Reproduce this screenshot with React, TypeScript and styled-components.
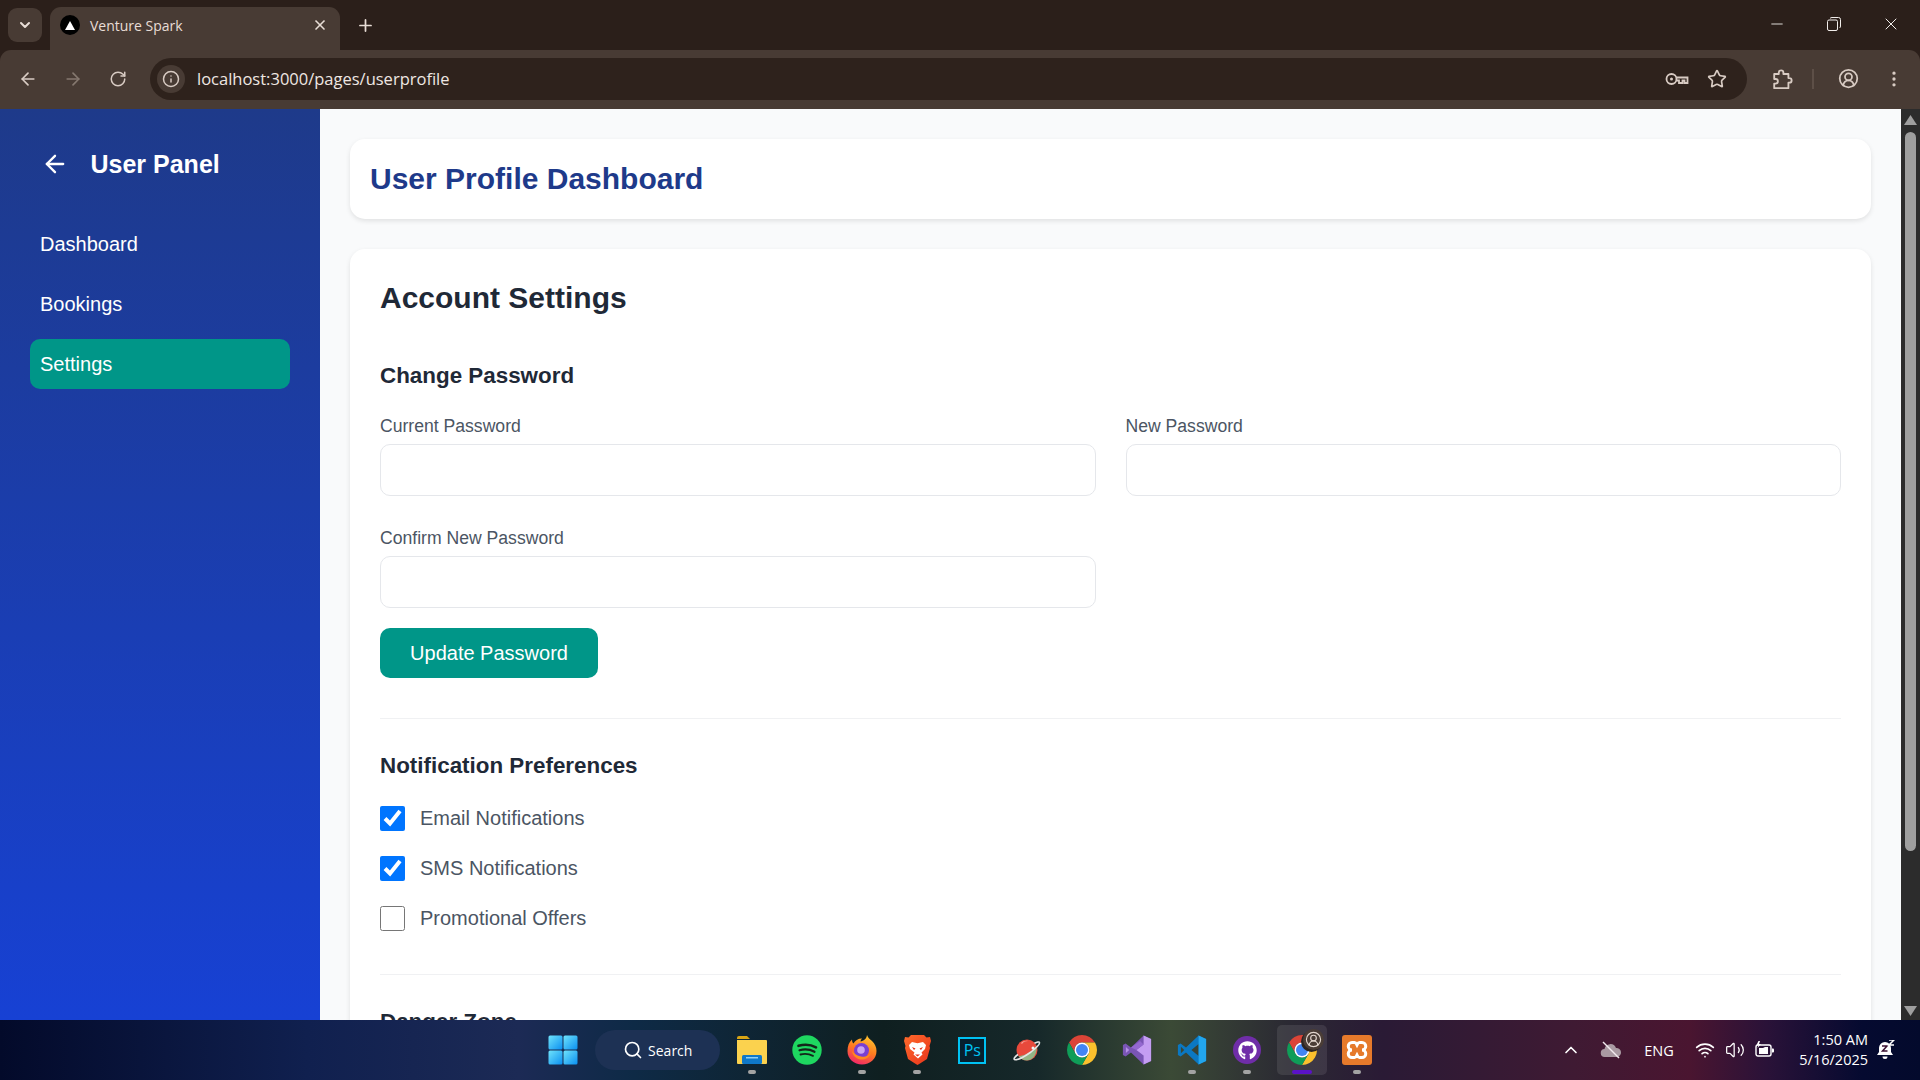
import React from "react";
import styled, { createGlobalStyle } from "styled-components";
import {
  ArrowLeft,
  ArrowRight,
  ChevronDown,
  ChevronUp,
  CircleUserRound,
  EllipsisVertical,
  Info,
  Minus,
  Plus,
  RotateCw,
  Search,
  Star,
  Volume2,
  Wifi,
  X,
} from "lucide-react";
import { FaGithub } from "react-icons/fa";

const UI_FONT = '"Liberation Sans", Arial, sans-serif';
const SYSTEM_FONT = '"Open Sans", "Noto Sans", sans-serif';

const GlobalStyle = createGlobalStyle`
  * { box-sizing: border-box; }
  html, body { margin: 0; padding: 0; height: 100%; overflow: hidden; }
  body { font-family: ${UI_FONT}; }
`;

const Screen = styled.div`
  display: flex;
  flex-direction: column;
  width: 1920px;
  height: 1080px;
  overflow: hidden;
  background: #2b1f1a;
`;

/* browser chrome */
const TabStrip = styled.div`
  display: flex;
  align-items: flex-end;
  flex: 0 0 50px;
  padding-left: 8px;
  background: #2b1f1a;
  color: #e8ddd6;
`;

const TabSearch = styled.div`
  display: flex;
  align-items: center;
  justify-content: center;
  width: 34px;
  height: 34px;
  margin-bottom: 8px;
  border-radius: 9px;
  background: #483b34;
`;

const Tab = styled.div`
  display: flex;
  align-items: center;
  width: 290px;
  height: 43px;
  margin-left: 8px;
  padding: 0 12px 7px 10px;
  border-radius: 11px 11px 0 0;
  background: #483b34;
`;

const Favicon = styled.span`
  display: flex;
  align-items: center;
  justify-content: center;
  width: 20px;
  height: 20px;
  border-radius: 50%;
  background: #000;
`;

const TabTitle = styled.span`
  flex: 1;
  margin-left: 10px;
  font-family: ${SYSTEM_FONT};
  font-size: 14px;
  color: #e8ddd6;
`;

const NewTab = styled.div`
  display: flex;
  align-items: center;
  justify-content: center;
  width: 30px;
  height: 30px;
  margin: 0 0 10px 10px;
`;

const WindowControls = styled.div`
  display: flex;
  align-items: center;
  height: 100%;
  margin-left: auto;
  padding-bottom: 2px;
  padding-right: 1px;
`;

const WindowButton = styled.div`
  display: flex;
  align-items: center;
  justify-content: center;
  width: 57px;
  height: 48px;
  color: #f2eeeb;
`;

const Toolbar = styled.div`
  display: flex;
  align-items: center;
  flex: 0 0 59px;
  padding: 0 0 2px 5px;
  border-radius: 11px 11px 0 0;
  background: #483b34;
  color: #d8cbc3;
`;

const NavButton = styled.div<{ $dim?: boolean; $left?: number }>`
  display: flex;
  align-items: center;
  justify-content: center;
  width: 45px;
  height: 40px;
  margin-left: ${(p) => p.$left ?? 0}px;
  color: ${(p) => (p.$dim ? "#85786f" : "#d8cbc3")};
`;

const Omnibox = styled.div`
  display: flex;
  align-items: center;
  width: 1597px;
  height: 42px;
  margin-left: 10px;
  padding: 0 10px 0 7px;
  border-radius: 21px;
  background: #2e221c;
`;

const SiteInfo = styled.div`
  display: flex;
  align-items: center;
  justify-content: center;
  width: 28px;
  height: 28px;
  border-radius: 50%;
  background: #483b34;
`;

const UrlText = styled.span`
  flex: 1;
  margin-left: 12px;
  font-family: ${SYSTEM_FONT};
  font-size: 16.5px;
  color: #efe7e2;
`;

const OmniIcon = styled.div`
  display: flex;
  align-items: center;
  justify-content: center;
  width: 40px;
  height: 40px;
`;

const ToolbarDivider = styled.div`
  width: 2px;
  height: 20px;
  margin: 0 3px 0 8px;
  background: #5d4f47;
`;

/* page */
const PageRow = styled.div`
  display: flex;
  flex: 1;
  min-height: 0;
  background: #f9fafb;
`;

const Sidebar = styled.aside`
  flex: 0 0 320px;
  padding: 30px;
  background: linear-gradient(180deg, #1e3a8a 0%, #1741d4 100%);
  color: #fff;
`;

const SidebarHead = styled.div`
  display: flex;
  align-items: center;
  height: 50px;
  margin-bottom: 30px;
  padding-left: 11px;
  gap: 21.5px;
`;

const SidebarTitle = styled.h2`
  margin: 0;
  font-size: 25px;
  font-weight: 700;
`;

const NavList = styled.nav`
  display: flex;
  flex-direction: column;
  gap: 10px;
`;

const NavItem = styled.a<{ $active?: boolean }>`
  display: flex;
  align-items: center;
  height: 50px;
  padding: 0 10px;
  border-radius: 10px;
  font-size: 20px;
  color: #fff;
  background: ${(p) => (p.$active ? "#009688" : "transparent")};
`;

const Main = styled.main`
  flex: 1;
  min-width: 0;
  padding: 30px;
  overflow: hidden;
`;

const HeaderCard = styled.header`
  display: flex;
  align-items: center;
  height: 80px;
  margin-bottom: 30px;
  padding: 0 20px;
  border-radius: 15px;
  background: #fff;
  box-shadow: 0 2px 5px rgba(0, 0, 0, 0.1);
`;

const PageTitle = styled.h1`
  margin: 0;
  font-size: 30px;
  font-weight: 700;
  color: #1e3a8a;
`;

const SettingsCard = styled.section`
  padding: 30px;
  border-radius: 15px;
  background: #fff;
  box-shadow: 0 2px 5px rgba(0, 0, 0, 0.1);
`;

const CardTitle = styled.h2`
  margin: 0 0 46px;
  font-size: 30px;
  line-height: 38px;
  font-weight: 700;
  color: #1f2937;
`;

const SectionTitle = styled.h3`
  margin: 0 0 27px;
  font-size: 22.4px;
  line-height: 26px;
  font-weight: 700;
  color: #1f2937;
`;

const FieldGrid = styled.div`
  display: grid;
  grid-template-columns: repeat(2, minmax(0, 1fr));
  gap: 32px 30px;
`;

const Field = styled.label`
  display: block;
`;

const FieldLabel = styled.span`
  display: block;
  margin-bottom: 8px;
  font-size: 17.6px;
  line-height: 20px;
  color: #4b5563;
`;

const TextInput = styled.input`
  display: block;
  width: 100%;
  height: 52px;
  padding: 0 15px;
  border: 1px solid #e5e7eb;
  border-radius: 10px;
  background: #fff;
  outline: none;
`;

const PrimaryButton = styled.button`
  display: block;
  width: 218px;
  height: 50px;
  margin-top: 20px;
  border: 0;
  border-radius: 10px;
  background: #009688;
  color: #fff;
  font-family: ${UI_FONT};
  font-size: 20px;
`;

const Divider = styled.hr<{ $top: number }>`
  margin: ${(p) => p.$top}px 0 34px;
  border: 0;
  border-top: 1px solid #f0f1f3;
`;

const CheckList = styled.div`
  display: flex;
  flex-direction: column;
  gap: 25px;
`;

const CheckRow = styled.label`
  display: flex;
  align-items: center;
  gap: 15px;
  height: 25px;
  font-size: 20px;
  color: #4b5563;
`;

const CheckBox = styled.input`
  width: 25px;
  height: 25px;
  margin: 0;
`;

const ScrollTrack = styled.div`
  display: flex;
  flex-direction: column;
  align-items: center;
  flex: 0 0 19px;
  background: #2c2c2c;
`;

const ScrollThumb = styled.div`
  width: 11px;
  height: 719px;
  margin: 7px 0 149px;
  border-radius: 6px;
  background: #9f9f9f;
`;

const ScrollArrow = styled.svg`
  display: block;
  width: 13px;
  height: 10px;
  margin-top: 6px;
  flex: none;
`;

/* taskbar */
const Taskbar = styled.footer`
  display: grid;
  grid-template-columns: 1fr auto 1fr;
  align-items: center;
  flex: 0 0 60px;
  background: linear-gradient(
    90deg,
    #030a2a 0%,
    #10204f 16%,
    #1c2a55 27%,
    #0e2a46 33%,
    #0f1f20 46%,
    #16282a 54%,
    #3b4a36 61%,
    #2b2a33 67%,
    #2a1a35 72%,
    #3f1a33 82%,
    #4a1530 88%,
    #2a1238 92%,
    #050a30 97%,
    #030a2c 100%
  );
`;

const TaskCenter = styled.div`
  display: flex;
  align-items: center;
  grid-column: 2;
  height: 60px;
`;

const TaskSlot = styled.div<{ $run?: boolean; $active?: boolean }>`
  position: relative;
  display: flex;
  align-items: center;
  justify-content: center;
  width: 55px;
  height: 60px;

  ${(p) =>
    p.$active &&
    `
    &::before {
      content: "";
      position: absolute;
      left: 0;
      top: 5px;
      width: 50px;
      height: 50px;
      margin-left: 2.5px;
      border-radius: 5px;
      background: rgba(255, 255, 255, 0.09);
    }
    &::after {
      content: "";
      position: absolute;
      left: 17.5px;
      bottom: 6px;
      width: 20px;
      height: 4px;
      border-radius: 2px;
      background: #5a12c8;
    }
  `}

  ${(p) =>
    p.$run &&
    `
    &::after {
      content: "";
      position: absolute;
      left: 23.5px;
      bottom: 6px;
      width: 8px;
      height: 4px;
      border-radius: 2px;
      background: #a3a3a3;
    }
  `}

  & > svg {
    position: relative;
  }
`;

const SearchPill = styled.div`
  display: flex;
  align-items: center;
  justify-content: center;
  gap: 5px;
  width: 125px;
  height: 40px;
  margin: 0 4.5px 0 5px;
  border-radius: 20px;
  background: #1d3154;
  color: #fff;
  font-family: ${SYSTEM_FONT};
  font-size: 14px;
`;

const Tray = styled.div`
  display: flex;
  align-items: center;
  justify-self: end;
  height: 60px;
  padding-right: 16px;
  color: #fff;
`;

const TrayItem = styled.div<{ $w: number }>`
  display: flex;
  align-items: center;
  justify-content: center;
  width: ${(p) => p.$w}px;
`;

const TrayText = styled.span`
  font-family: ${SYSTEM_FONT};
  font-size: 14.5px;
`;

const Clock = styled.div`
  width: 85px;
  font-family: ${SYSTEM_FONT};
  font-size: 14.5px;
  line-height: 20px;
  text-align: right;
  color: #fff;
`;

const WindowsLogo = () => (
  <svg width="30" height="30" viewBox="0 0 30 30">
    <defs>
      <linearGradient id="win" x1="0" y1="0" x2="1" y2="1">
        <stop offset="0" stopColor="#6fe3fb" />
        <stop offset="1" stopColor="#0a8ff0" />
      </linearGradient>
    </defs>
    <rect x="0.5" y="0.5" width="14" height="14" rx="1.5" fill="url(#win)" />
    <rect x="15.5" y="0.5" width="14" height="14" rx="1.5" fill="url(#win)" />
    <rect x="0.5" y="15.5" width="14" height="14" rx="1.5" fill="url(#win)" />
    <rect x="15.5" y="15.5" width="14" height="14" rx="1.5" fill="url(#win)" />
  </svg>
);

const FolderIcon = () => (
  <svg width="30" height="28" viewBox="0 0 30 28">
    <path d="M0 2a2 2 0 0 1 2-2h8l3 3h-13z" fill="#d9a514" />
    <path d="M0 4h29a1 1 0 0 1 1 1v22a1 1 0 0 1-1 1H1a1 1 0 0 1-1-1z" fill="#fbd24e" />
    <rect x="5" y="19" width="20" height="9" rx="1.5" fill="#0f78c9" />
    <rect x="9" y="21" width="12" height="1.5" fill="#8ed0f7" />
  </svg>
);

const SpotifyIcon = () => (
  <svg width="30" height="30" viewBox="0 0 30 30">
    <circle cx="15" cy="15" r="14.7" fill="#1ed760" />
    <g fill="none" stroke="#14261a" strokeLinecap="round">
      <path d="M6.5 10.8c6-1.7 12.5-1.2 17.5 1.6" strokeWidth="2.6" />
      <path d="M7.5 15.3c5-1.4 10.5-.9 15 1.5" strokeWidth="2.2" />
      <path d="M8.5 19.5c4.3-1 8.7-.6 12.5 1.4" strokeWidth="1.8" />
    </g>
  </svg>
);

const FirefoxIcon = () => (
  <svg width="30" height="30" viewBox="0 0 30 30">
    <defs>
      <linearGradient id="ffx" x1="0.7" y1="0" x2="0.3" y2="1">
        <stop offset="0" stopColor="#ffc62e" />
        <stop offset="0.5" stopColor="#ff7a1f" />
        <stop offset="1" stopColor="#f0256b" />
      </linearGradient>
    </defs>
    <path
      d="M20 0c1 3 3 4 5 6 3 3 4.5 6 4.5 10 0 8-6.500 13.500-14.500 13.500S.5 24 .5 16C.5 11 2 7 5 4.500c0 2 .5 3 1.500 4C8 5.500 11 3.500 15 3.500c-1 1-1.500 2-1.500 3 3-.5 6-2.500 6.500-6.500z"
      fill="url(#ffx)"
    />
    <circle cx="14.500" cy="15.500" r="7.500" fill="#7a3fd0" />
    <circle cx="14" cy="15" r="3.800" fill="#c9a4f2" />
    <path d="M5 16c1 6 6 9 11 8.500 4-.4 7-3 8-7-2 3.500-6 5-10 4-4-.8-7-3-9-5.500z" fill="#ff8a1e" />
  </svg>
);

const BraveIcon = () => (
  <svg width="27" height="30" viewBox="0 0 27 30">
    <defs>
      <linearGradient id="brv" x1="0" y1="0" x2="1" y2="1">
        <stop offset="0" stopColor="#ff6a2b" />
        <stop offset="1" stopColor="#e8341c" />
      </linearGradient>
    </defs>
    <path
      d="M7 0h13l2.500 2.500L26 2l1 4-1.500 5 .5 2-3 11-7 4.500-2.500 1.500-2.500-1.500L4 24 1 13l.5-2L0 6l1-4 3.500.5z"
      fill="url(#brv)"
    />
    <path
      d="M8 7l5.500 1.200L19 7l3 3-1 4-3.500 3.500 1 2-4.500 4-4.500-4 1-2L6 14l-1-4z"
      fill="#fff"
    />
    <path d="M8 12l3.500 1.500L10 15zM19 12l-3.500 1.500L17 15z" fill="#e8341c" />
    <path d="M11 19.500h5L13.500 21.500z" fill="#e8341c" />
  </svg>
);

const PsBox = styled.div`
  display: flex;
  align-items: center;
  justify-content: center;
  width: 28px;
  height: 27px;
  border: 2px solid #00c2f3;
  background: #06202e;
  color: #00c2f3;
  font-family: ${SYSTEM_FONT};
  font-size: 16px;
  line-height: 1;
`;

const PlanetIcon = () => (
  <svg width="28" height="24" viewBox="0 0 28 24">
    <circle cx="14" cy="12" r="10.500" fill="#e8493b" />
    <path d="M5.500 18c4 0 11-2 18-10 1 6-2.500 14.500-9.500 14.500-3.500 0-6.500-2-8.500-4.500z" fill="#93b585" />
    <path d="M8 5c2-2 5-2.500 7-2-3 0-5 1-6 3z" fill="#f7a79d" />
    <path
      d="M5 16.500C1.500 19 .5 21 1.500 21.500 4 22.500 11 19 18 14c5-4 9-8 8.500-9.500-.3-1-2.500-.5-5 .8"
      fill="none"
      stroke="#e4e4e4"
      strokeWidth="1.600"
    />
    <circle cx="20" cy="10" r="1.500" fill="#f2f2f2" />
  </svg>
);

const ChromeIcon = () => (
  <svg width="30" height="30" viewBox="4 4 40 40">
    <path d="M24 14H41.320A20 20 0 0 0 6.680 14L15.340 29A10 10 0 0 1 24 14Z" fill="#db4437" />
    <path d="M41.320 14A20 20 0 0 1 24 44L32.660 29A10 10 0 0 0 24 14Z" fill="#fbc02d" />
    <path d="M24 44A20 20 0 0 1 6.680 14L15.340 29A10 10 0 0 0 32.660 29Z" fill="#0f9d58" />
    <circle cx="24" cy="24" r="10" fill="#fff" />
    <circle cx="24" cy="24" r="8" fill="#4285f4" />
  </svg>
);

const VisualStudioIcon = () => (
  <svg width="30" height="30" viewBox="0 0 100 100">
    <path d="M72 2 30 42 12 28 3 33v34l9 5 18-14 42 40 25-11V13z" fill="#7a55b5" />
    <path d="M72 2l25 11v74l-25 11V68L48 50l24-18z" fill="#c49df2" />
    <path d="M13 40v20l11-10z" fill="#b58fe6" />
    <path d="M48 50 72 32 60 20 30 42z" fill="#9468d0" />
  </svg>
);

const VsCodeIcon = () => (
  <svg width="30" height="30" viewBox="0 0 100 100">
    <path
      fill="#0b78c2"
      fillRule="evenodd"
      d="M72 2 30 42 12 28 3 33v34l9 5 18-14 42 40 25-11V13zM72 30 48 50l24 20zM13 39v22l11-11z"
    />
    <path d="M72 2l25 11v74L72 98z" fill="#22a6ee" />
  </svg>
);

const GithubCircle = styled.div`
  display: flex;
  align-items: center;
  justify-content: center;
  width: 28px;
  height: 28px;
  border-radius: 50%;
  background: #6f2da8;
  color: #fff;
`;

const ChromeProfile = styled.div`
  position: absolute;
  left: 28.5px;
  top: 9px;
  display: flex;
  align-items: center;
  justify-content: center;
  width: 21px;
  height: 21px;
  border-radius: 50%;
  background: #4a3d36;
  box-shadow: -2px 2px 0 #2c2420;
  color: #e2d6ce;
`;

const XamppIcon = () => (
  <svg width="30" height="30" viewBox="0 0 30 30">
    <rect width="30" height="30" rx="3" fill="#e67a2b" />
    <path
      d="M10 7.500h2.500c1.500 0 2 1.500 2.500 2.500.5-1 1-2.500 2.500-2.500H20a3.500 3.500 0 0 1 0 7.500 3.500 3.500 0 0 1 0 7.500h-2.500c-1.500 0-2-1.500-2.500-2.500-.5 1-1 2.500-2.500 2.500H10A3.500 3.500 0 0 1 10 15a3.500 3.500 0 0 1 0-7.500z"
      fill="none"
      stroke="#fff"
      strokeWidth="3"
    />
  </svg>
);

const KeyIcon = () => (
  <svg width="24" height="14" viewBox="0 0 24 14" fill="none" stroke="#d8cbc3" strokeWidth="1.800">
    <circle cx="6.500" cy="7" r="5" />
    <circle cx="6.500" cy="7" r="1.500" fill="#d8cbc3" stroke="none" />
    <path d="M11.500 5.500H22.500V11H19.500V8.500H17.500V11H14V8.500H11.500" />
  </svg>
);

const ExtensionIcon = () => (
  <svg width="22" height="22" viewBox="0 0 24 24" fill="none" stroke="#d8cbc3" strokeWidth="2" strokeLinejoin="round">
    <path d="M3.500 6.500h5V5a2.500 2.500 0 0 1 5 0v1.500h5.500V11h1a2.500 2.500 0 0 1 0 5h-1v6H3.500v-5H5a2.500 2.500 0 0 0 0-5H3.500z" />
  </svg>
);

const RestoreIcon = () => (
  <svg width="14" height="14" viewBox="0 0 14 14" fill="none" stroke="#f2eeeb" strokeWidth="1">
    <rect x="0.500" y="3" width="10" height="10.500" rx="1.500" />
    <path d="M3 1.500C3.500.8 4 .5 5 .5h6.500A2 2 0 0 1 13.500 2.500V9c0 1-.3 1.500-1 2" />
  </svg>
);

const CloudOff = () => (
  <svg width="22" height="18" viewBox="0 0 22 18">
    <path d="M5 16a4 4 0 0 1-.5-8 6 6 0 0 1 11.500-1 4.500 4.500 0 0 1 1 9z" fill="#a99aa2" />
    <path d="M3 1l16 16" stroke="#f2eaee" strokeWidth="1.500" />
  </svg>
);

const BatteryIcon = () => (
  <svg width="20" height="18" viewBox="0 0 20 18" fill="none">
    <rect x="1" y="4" width="15" height="11" rx="2" stroke="#fff" strokeWidth="1.400" />
    <path d="M4 13V7h4l2-1 3 0v7z" fill="#fff" />
    <path d="M17 7.500h1a1 1 0 0 1 1 1v2a1 1 0 0 1-1 1h-1z" fill="#fff" />
    <path d="M3.500 0 1.500 4h2L2.500 7 6 3H4l1-3z" fill="#fff" />
  </svg>
);

const BellIcon = () => (
  <svg width="18" height="20" viewBox="0 0 18 20">
    <path d="M8 2a6 6 0 0 0-6 6v4l-2 3h16l-2-3V8a6 6 0 0 0-6-6z" fill="#fff" />
    <path d="M5.500 16.500a2.500 2.500 0 0 0 5 0z" fill="#fff" />
    <path d="M5 6h5L5.500 11h5" fill="none" stroke="#3a1030" strokeWidth="1.500" />
    <path d="M12 0h5l-5 5h5" fill="none" stroke="#fff" strokeWidth="1.500" />
  </svg>
);

const navItems = ["Dashboard", "Bookings", "Settings"];

const notifications = [
  { label: "Email Notifications", checked: true },
  { label: "SMS Notifications", checked: true },
  { label: "Promotional Offers", checked: false },
];

export default function App() {
  return (
    <Screen>
      <GlobalStyle />
      <TabStrip>
        <TabSearch>
          <ChevronDown size={16} strokeWidth={3} />
        </TabSearch>
        <Tab>
          <Favicon>
            <svg width="10" height="9" viewBox="0 0 10 9">
              <path d="M5 0l5 9H0z" fill="#fff" />
            </svg>
          </Favicon>
          <TabTitle>Venture Spark</TabTitle>
          <X size={16} strokeWidth={2.5} />
        </Tab>
        <NewTab>
          <Plus size={19} strokeWidth={2.2} />
        </NewTab>
        <WindowControls>
          <WindowButton>
            <Minus size={18} strokeWidth={1.2} />
          </WindowButton>
          <WindowButton>
            <RestoreIcon />
          </WindowButton>
          <WindowButton>
            <X size={20} strokeWidth={1.2} />
          </WindowButton>
        </WindowControls>
      </TabStrip>

      <Toolbar>
        <NavButton>
          <ArrowLeft size={20} />
        </NavButton>
        <NavButton $dim>
          <ArrowRight size={20} />
        </NavButton>
        <NavButton>
          <RotateCw size={18} />
        </NavButton>
        <Omnibox>
          <SiteInfo>
            <Info size={18} />
          </SiteInfo>
          <UrlText>localhost:3000/pages/userprofile</UrlText>
          <OmniIcon>
            <KeyIcon />
          </OmniIcon>
          <OmniIcon>
            <Star size={20} />
          </OmniIcon>
        </Omnibox>
        <NavButton $left={12}>
          <ExtensionIcon />
        </NavButton>
        <ToolbarDivider />
        <NavButton $left={9}>
          <CircleUserRound size={21} />
        </NavButton>
        <NavButton>
          <EllipsisVertical size={20} />
        </NavButton>
      </Toolbar>

      <PageRow>
        <Sidebar>
          <SidebarHead>
            <ArrowLeft size={28} strokeWidth={2} />
            <SidebarTitle>User Panel</SidebarTitle>
          </SidebarHead>
          <NavList>
            {navItems.map((item) => (
              <NavItem key={item} $active={item === "Settings"}>
                {item}
              </NavItem>
            ))}
          </NavList>
        </Sidebar>

        <Main>
          <HeaderCard>
            <PageTitle>User Profile Dashboard</PageTitle>
          </HeaderCard>
          <SettingsCard>
            <CardTitle>Account Settings</CardTitle>
            <SectionTitle>Change Password</SectionTitle>
            <FieldGrid>
              <Field>
                <FieldLabel>Current Password</FieldLabel>
                <TextInput type="password" />
              </Field>
              <Field>
                <FieldLabel>New Password</FieldLabel>
                <TextInput type="password" />
              </Field>
              <Field>
                <FieldLabel>Confirm New Password</FieldLabel>
                <TextInput type="password" />
              </Field>
            </FieldGrid>
            <PrimaryButton>Update Password</PrimaryButton>
            <Divider $top={40} />
            <SectionTitle>Notification Preferences</SectionTitle>
            <CheckList>
              {notifications.map((n) => (
                <CheckRow key={n.label}>
                  <CheckBox type="checkbox" defaultChecked={n.checked} />
                  {n.label}
                </CheckRow>
              ))}
            </CheckList>
            <Divider $top={43} />
            <SectionTitle>Danger Zone</SectionTitle>
          </SettingsCard>
        </Main>

        <ScrollTrack>
          <ScrollArrow viewBox="0 0 13 10">
            <path d="M6.500 0 13 10H0z" fill="#9f9f9f" />
          </ScrollArrow>
          <ScrollThumb />
          <ScrollArrow viewBox="0 0 13 10">
            <path d="M0 0h13L6.500 10z" fill="#9f9f9f" />
          </ScrollArrow>
        </ScrollTrack>
      </PageRow>

      <Taskbar>
        <TaskCenter>
          <TaskSlot>
            <WindowsLogo />
          </TaskSlot>
          <SearchPill>
            <Search size={20} strokeWidth={2} />
            Search
          </SearchPill>
          <TaskSlot $run>
            <FolderIcon />
          </TaskSlot>
          <TaskSlot>
            <SpotifyIcon />
          </TaskSlot>
          <TaskSlot $run>
            <FirefoxIcon />
          </TaskSlot>
          <TaskSlot $run>
            <BraveIcon />
          </TaskSlot>
          <TaskSlot>
            <PsBox>Ps</PsBox>
          </TaskSlot>
          <TaskSlot>
            <PlanetIcon />
          </TaskSlot>
          <TaskSlot>
            <ChromeIcon />
          </TaskSlot>
          <TaskSlot>
            <VisualStudioIcon />
          </TaskSlot>
          <TaskSlot $run>
            <VsCodeIcon />
          </TaskSlot>
          <TaskSlot $run>
            <GithubCircle>
              <FaGithub size={19} />
            </GithubCircle>
          </TaskSlot>
          <TaskSlot $active>
            <ChromeIcon />
            <ChromeProfile>
              <CircleUserRound size={17} strokeWidth={1.6} />
            </ChromeProfile>
          </TaskSlot>
          <TaskSlot $run>
            <XamppIcon />
          </TaskSlot>
        </TaskCenter>
        <Tray>
          <TrayItem $w={40}>
            <ChevronUp size={20} strokeWidth={2} />
          </TrayItem>
          <TrayItem $w={40}>
            <CloudOff />
          </TrayItem>
          <TrayItem $w={56}>
            <TrayText>ENG</TrayText>
          </TrayItem>
          <TrayItem $w={36}>
            <Wifi size={20} />
          </TrayItem>
          <TrayItem $w={24}>
            <Volume2 size={20} strokeWidth={1.5} />
          </TrayItem>
          <TrayItem $w={36}>
            <BatteryIcon />
          </TrayItem>
          <Clock>
            <div>1:50 AM</div>
            <div>5/16/2025</div>
          </Clock>
          <TrayItem $w={36}>
            <BellIcon />
          </TrayItem>
        </Tray>
      </Taskbar>
    </Screen>
  );
}
